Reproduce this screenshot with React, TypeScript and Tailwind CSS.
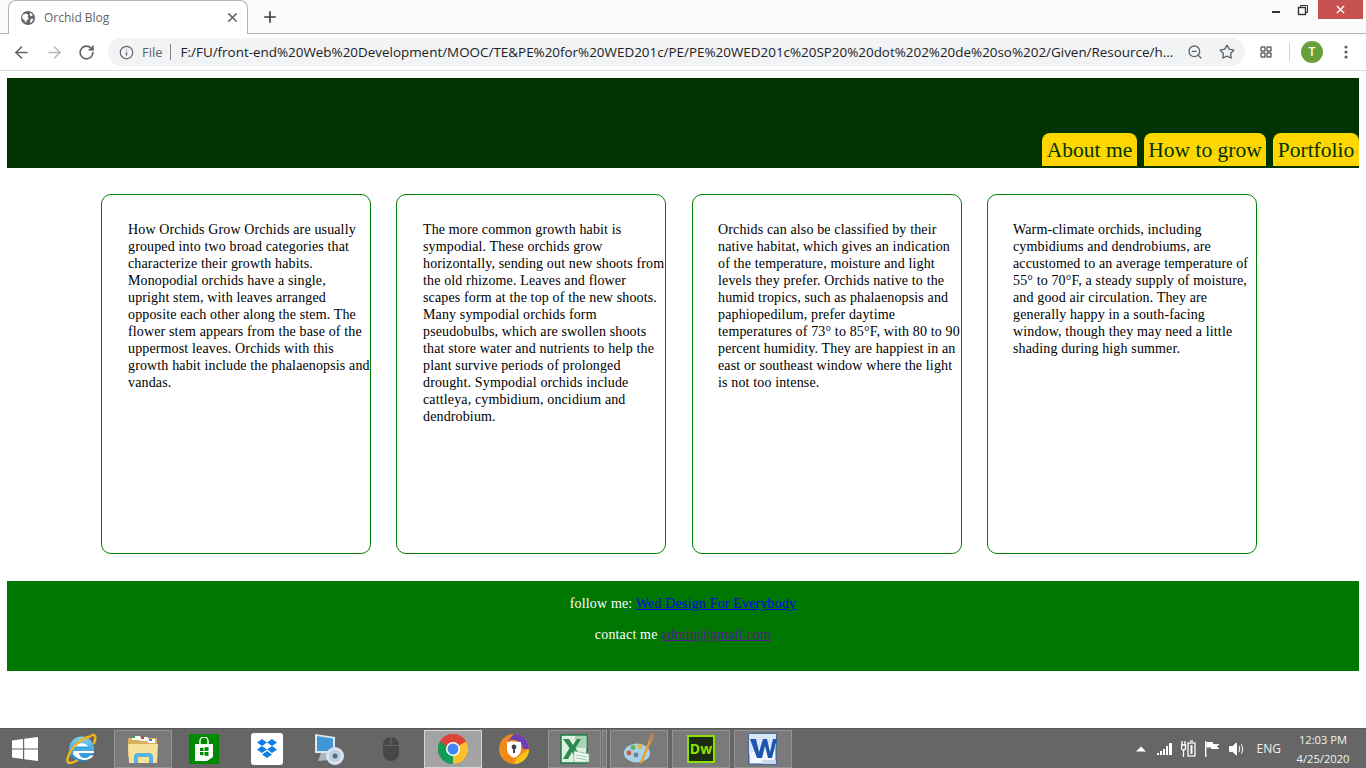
import React from "react";
import { ArrowLeft, ArrowRight, RotateCw, Info, ZoomOut, Star, X, Plus } from "lucide-react";

const cards: string[][] = [
  ["How Orchids Grow Orchids are usually","grouped into two broad categories that","characterize their growth habits.","Monopodial orchids have a single,","upright stem, with leaves arranged","opposite each other along the stem. The","flower stem appears from the base of the","uppermost leaves. Orchids with this","growth habit include the phalaenopsis and","vandas."],
  ["The more common growth habit is","sympodial. These orchids grow","horizontally, sending out new shoots from","the old rhizome. Leaves and flower","scapes form at the top of the new shoots.","Many sympodial orchids form","pseudobulbs, which are swollen shoots","that store water and nutrients to help the","plant survive periods of prolonged","drought. Sympodial orchids include","cattleya, cymbidium, oncidium and","dendrobium."],
  ["Orchids can also be classified by their","native habitat, which gives an indication","of the temperature, moisture and light","levels they prefer. Orchids native to the","humid tropics, such as phalaenopsis and","paphiopedilum, prefer daytime","temperatures of 73° to 85°F, with 80 to 90","percent humidity. They are happiest in an","east or southeast window where the light","is not too intense."],
  ["Warm-climate orchids, including","cymbidiums and dendrobiums, are","accustomed to an average temperature of","55° to 70°F, a steady supply of moisture,","and good air circulation. They are","generally happy in a south-facing","window, though they may need a little","shading during high summer."],
];

function Cell({ w, ml, boxed, active, children }: { w: string; ml: string; boxed?: boolean; active?: boolean; children: React.ReactNode }) {
  const box = active
    ? "border border-[#d5d5d5] bg-[#a3a3a3]"
    : boxed
    ? "border border-[#939393] bg-[#7a7a7a]"
    : "";
  return <div className={`h-[38px] flex items-center justify-center shrink-0 ${w} ${ml} ${box}`}>{children}</div>;
}

function Tab({ label, w, ml }: { label: string; w: string; ml: string }) {
  return (
    <a className={`block h-[33px] ${w} ${ml} shrink-0 bg-[#ffd700] rounded-t-[8px] text-[21.5px] leading-[35px] text-center text-[#003300] whitespace-nowrap`}>
      {label}
    </a>
  );
}

export default function App() {
  return (
    <div className="w-[1366px] h-[768px] overflow-hidden bg-white flex flex-col font-['Liberation_Serif',serif]">
      {/* Browser chrome */}
      <div className="h-[71px] shrink-0 flex flex-col border-b border-[#dadce0] font-['Open_Sans','Noto_Sans',sans-serif]">
        <div className="h-[34px] shrink-0 flex bg-[#fbfbfb] relative">
          <div className="absolute left-0 right-0 bottom-0 h-px bg-[#b4b4b4]" />
          <div className="relative z-10 ml-[8px] w-[240px] h-[34px] bg-white border border-b-0 border-[#b4b4b4] rounded-t-[8px] flex items-center pl-[12px] pr-[7px]">
            <svg width="14" height="14" viewBox="0 0 14 14" className="shrink-0">
              <circle cx="7" cy="7" r="7" fill="#5f6368" />
              <path d="M2 3.5 L5 2.5 L7.5 4 L6.5 6 L8 7.5 L6 9 L5 12 L3.5 9.5 L1 7 Z M9.5 1.5 L12 4 L10 5.5 L8.5 3.5 Z M9.5 8 L12.5 7.5 L11 11 L9 12 Z" fill="#fff" />
            </svg>
            <span className="ml-[9px] text-[12px] leading-[16px] text-[#5f6368]">Orchid Blog</span>
            <X size={15} strokeWidth={2.6} className="ml-auto text-[#5f6368]" />
          </div>
          <Plus size={18} strokeWidth={2.2} className="relative z-10 ml-[13px] mt-[8px] text-[#3c4043]" />
          <div className="ml-auto flex items-start">
            <div className="w-[8px] h-[2px] mt-[11px] mr-[17px] bg-[#333]" />
            <svg width="12" height="12" viewBox="0 0 12 12" className="mt-[4px] mr-[9px]" fill="none" stroke="#333" strokeWidth="1">
              <rect x="1.5" y="3.5" width="7" height="7" strokeWidth="1.4" />
              <path d="M3.5 3 V1.5 H10.5 V8.5 H9" />
            </svg>
            <div className="w-[45px] h-[19px] mr-[3px] bg-[#c75050] flex items-center justify-center">
              <X size={13} strokeWidth={2.6} className="text-white" />
            </div>
          </div>
        </div>
        <div className="flex-1 flex items-center bg-white">
          <ArrowLeft size={19} strokeWidth={2} className="ml-[12px] text-[#5f6368]" />
          <ArrowRight size={19} strokeWidth={2} className="ml-[14px] text-[#b5b7ba]" />
          <RotateCw size={17} strokeWidth={2.4} className="ml-[14px] text-[#5f6368]" />
          <div className="ml-[13px] w-[1137px] h-[28px] rounded-full bg-[#f1f3f4] flex items-center pl-[11px] text-[#5f6368]">
            <Info size={15} strokeWidth={2} />
            <span className="ml-[8px] text-[13px] leading-[18px]">File</span>
            <span className="ml-[7px] w-px h-[16px] bg-[#80868b]" />
            <span className="ml-[10px] text-[13.43px] leading-[18px] text-[#202124] whitespace-nowrap w-[1000px] overflow-hidden">
              F:/FU/front-end%20Web%20Development/MOOC/TE&amp;PE%20for%20WED201c/PE/PE%20WED201c%20SP20%20dot%202%20de%20so%202/Given/Resource/h...
            </span>
            <ZoomOut size={16} strokeWidth={2} className="ml-auto" />
            <Star size={16} strokeWidth={2} className="ml-[16px] mr-[10px]" />
          </div>
          <svg width="12" height="12" viewBox="0 0 12 12" className="ml-[15px]" fill="none" stroke="#5f6368" strokeWidth="1.4">
            <rect x="1" y="1" width="4" height="4" rx="0.6" /><rect x="7" y="1" width="4" height="4" rx="0.6" />
            <rect x="1" y="7" width="4" height="4" rx="0.6" /><rect x="7" y="7" width="4" height="4" rx="0.6" />
          </svg>
          <span className="ml-[17px] w-px h-[18px] bg-[#d0d2d5]" />
          <div className="ml-[11px] w-[22px] h-[22px] rounded-full bg-[#689f38] text-white text-[12px] font-semibold flex items-center justify-center">T</div>
          <svg width="4" height="14" viewBox="0 0 4 14" className="ml-[21px]" fill="#5f6368">
            <circle cx="2" cy="2" r="1.6" /><circle cx="2" cy="7" r="1.6" /><circle cx="2" cy="12" r="1.6" />
          </svg>
        </div>
      </div>

      {/* Page */}
      <div className="flex-1 px-[7px] pt-[7px] text-[14px] text-black">
        <header className="h-[90px] bg-[#003300] flex items-start justify-end pt-[55px]">
          <Tab label="About me" w="w-[95px]" ml="ml-0" />
          <Tab label="How to grow" w="w-[122px]" ml="ml-[7px]" />
          <Tab label="Portfolio" w="w-[86px]" ml="ml-[7px]" />
        </header>
        <main className="mt-[26px] ml-[94px] flex">
          {cards.map((lines, i) => (
            <div key={i} className={`w-[270px] h-[360px] shrink-0 border border-[#008000] rounded-[10px] pt-[26px] leading-[17px] tracking-[0.14px] ${i === 0 ? "pl-[26px]" : i === 1 ? "ml-[25px] pl-[26px]" : i === 2 ? "ml-[26px] pl-[25px]" : "ml-[25px] pl-[25px]"}`}>
              {lines.map((l) => (
                <span key={l} className="block whitespace-nowrap">{l}</span>
              ))}
            </div>
          ))}
        </main>
        <footer className="mt-[27px] h-[90px] bg-[#007700] text-white text-center pt-[14px] leading-[17px] tracking-[0.17px]">
          <p>follow me: <a className="text-[#0000ee] underline">Wed Design For Everybody</a></p>
          <p className="mt-[14px]">contact me <a className="text-[#551a8b] underline">admin@gmail.com</a></p>
        </footer>
      </div>

      {/* Taskbar */}
      <div className="h-[40px] shrink-0 bg-[#666666] border-t border-[#5a5a5a] flex items-center text-white font-['Open_Sans','Noto_Sans',sans-serif]">
        <Cell w="w-[50px]" ml="ml-0">
          <svg width="26" height="26" viewBox="0 0 26 26" fill="#fff">
            <path d="M0 4.5 L11 3 V12.4 H0 Z M12.2 2.8 L26 1 V12.4 H12.2 Z M0 13.6 H11 V23 L0 21.5 Z M12.2 13.6 H26 V25 L12.2 23.2 Z" />
          </svg>
        </Cell>
        <Cell w="w-[58px]" ml="ml-[2px]">
          <svg width="32" height="32" viewBox="0 0 32 32">
            <defs>
              <linearGradient id="ieb" x1="0" y1="0" x2="0" y2="1"><stop offset="0" stopColor="#7fd4f5" /><stop offset="1" stopColor="#1787cf" /></linearGradient>
            </defs>
            <circle cx="16.5" cy="16" r="12.5" fill="url(#ieb)" />
            <path d="M9.5 15 H23.8 A7.6 7 0 0 0 9.5 15 Z" fill="#fff" />
            <path d="M8.5 18 H29 L29 20 H14 A6 5.5 0 0 0 25 22.5 H29 A13 12.5 0 0 1 8 21 Z" fill="#fff" />
            <path d="M8.5 13.5 H24 V15.5 H8.5 Z" fill="#2fa0de" />
            <path d="M27 2.2 C31 1 31 6 29 10 M25 3.5 C13 6 4 18 2.5 26 C1.5 31 6 31 12 27.5" fill="none" stroke="#f2b61a" strokeWidth="2.4" strokeLinecap="round" />
          </svg>
        </Cell>
        <Cell w="w-[58px]" ml="ml-[4px]" boxed>
          <svg width="32" height="32" viewBox="0 0 32 32">
            <path d="M1 5 H30 V24 H1 Z" fill="#d9b35a" />
            <rect x="5" y="3" width="8" height="4" fill="#fff" /><rect x="13" y="4" width="8" height="4" fill="#f4f4f4" /><rect x="21" y="6" width="7" height="4" fill="#fff" />
            <rect x="5" y="3" width="3" height="2" fill="#3ca14a" /><rect x="14" y="4" width="3" height="2" fill="#c8402f" /><rect x="22" y="6" width="3" height="2" fill="#3b86d1" />
            <path d="M1 11 H31 L30 30 H2 Z" fill="#f7e29c" />
            <path d="M7 30 V24 Q7 20 11 20 H22 Q26 20 26 24 V30 H22 V24 H11 V30 Z" fill="#57b3e0" />
          </svg>
        </Cell>
        <Cell w="w-[58px]" ml="ml-[3px]">
          <div className="w-[30px] h-[30px] bg-[#008a00] flex items-center justify-center">
            <svg width="20" height="24" viewBox="0 0 20 24">
              <path d="M6 7 V4 A4 4 0 0 1 14 4 V7" fill="none" stroke="#fff" strokeWidth="1.4" />
              <path d="M1 7 H19 V20 L13 24 H1 Z" fill="#fff" />
              <path d="M6 11 L9.5 10.5 V14 H6 Z M10.5 10.4 L14.5 10 V14 H10.5 Z M6 15 H9.5 V18.5 L6 18 Z M10.5 15 H14.5 V19 L10.5 18.6 Z" fill="#008a00" />
            </svg>
          </div>
        </Cell>
        <Cell w="w-[58px]" ml="ml-[5px]">
          <div className="w-[32px] h-[32px] bg-white rounded-[3px] flex items-center justify-center">
            <svg width="22" height="22" viewBox="0 0 22 22" fill="#0b7fe6">
              <path d="M6 1 L11 4.5 L6 8 L1 4.5 Z M16 1 L21 4.5 L16 8 L11 4.5 Z M6 8 L11 11.5 L6 15 L1 11.5 Z M16 8 L21 11.5 L16 15 L11 11.5 Z M6 16.5 L11 13 L16 16.5 L11 20 Z" />
            </svg>
          </div>
        </Cell>
        <Cell w="w-[58px]" ml="ml-[4px]">
          <svg width="32" height="34" viewBox="0 0 32 34">
            <path d="M2 2 L22 5 V21 L2 21 Z" fill="#dfe7ee" />
            <path d="M4 4 L20 6.5 V19 L4 19 Z" fill="#3f97d8" />
            <path d="M8 21 H15 L16 28 L5 29 Z" fill="#aeb6bd" />
            <circle cx="22" cy="24" r="9" fill="#dce3ea" />
            <circle cx="22" cy="24" r="6" fill="#b9d2e6" />
            <circle cx="22" cy="24" r="2.5" fill="#5a6a78" />
          </svg>
        </Cell>
        <Cell w="w-[58px]" ml="ml-[4px]">
          <svg width="18" height="26" viewBox="0 0 18 26">
            <path d="M1 9 A8 8 0 0 1 8.4 1 V9 Z M9.6 1 A8 8 0 0 1 17 9 V9 H9.6 Z M1 10 H17 V17 A8 8 0 0 1 1 17 Z" fill="#474747" />
          </svg>
        </Cell>
        <Cell w="w-[58px]" ml="ml-[4px]" active>
          <svg width="30" height="30" viewBox="0 0 30 30">
            <circle cx="15" cy="15" r="15" fill="#db4437" />
            <path d="M15 15 L28 7.5 A15 15 0 0 1 15 30 Z" fill="#fbc02d" />
            <path d="M15 15 L15 30 A15 15 0 0 1 2 7.5 Z" fill="#0f9d58" />
            <path d="M2 7.5 A15 15 0 0 1 15 0 A15 15 0 0 1 28 7.5 H15 L9 12 Z" fill="#db4437" />
            <circle cx="15" cy="15" r="7" fill="#fff" />
            <circle cx="15" cy="15" r="5.5" fill="#4285f4" />
          </svg>
        </Cell>
        <Cell w="w-[58px]" ml="ml-[3px]">
          <svg width="30" height="30" viewBox="0 0 30 30">
            <circle cx="15" cy="15" r="15" fill="#f08a1d" />
            <path d="M15 0 A15 15 0 0 1 30 15 L24 15 A10 10 0 0 0 8 8 Z" fill="#6a3fb5" />
            <path d="M30 15 A15 15 0 0 1 15 30 L18 24 Z" fill="#f5c518" />
            <path d="M8 8 Q15 7 22 8 V15 Q22 21 15 24 Q8 21 8 15 Z" fill="#fff" />
            <circle cx="15" cy="13" r="2.4" fill="#444" />
            <rect x="14" y="14" width="2" height="5" fill="#444" />
          </svg>
        </Cell>
        <Cell w="w-[53px]" ml="ml-[5px]" boxed>
          <svg width="30" height="30" viewBox="0 0 30 30">
            <rect x="1" y="1" width="26" height="28" fill="#dff0e2" stroke="#1f7a43" strokeWidth="1.5" />
            <path d="M15 2 H26.5 V14 H15 Z" fill="#a9d5b5" />
            <path d="M3 5 H9 L13 11 L17 5 H21 L15.5 14 L22 25 H16 L12 18 L8 25 H3 L9.5 14 Z" fill="#2a8a4e" />
            <path d="M14 17 L29 20 V28 H14 Z" fill="#f4f8f4" stroke="#7cb58f" strokeWidth="0.7" />
            <path d="M16 21 L27 23 M16 24 L27 26" stroke="#8cc09c" strokeWidth="0.8" />
          </svg>
        </Cell>
        <div className="w-[5px] h-[38px] ml-px shrink-0 border border-[#939393] bg-[#7a7a7a]" />
        <Cell w="w-[58px]" ml="ml-[3px]" boxed>
          <svg width="32" height="34" viewBox="0 0 32 34">
            <ellipse cx="14" cy="21" rx="13" ry="9.5" fill="#a6d2ea" />
            <circle cx="6" cy="21" r="2.4" fill="#d94f3d" />
            <circle cx="10" cy="15.5" r="2.4" fill="#67b04a" />
            <circle cx="17" cy="14.5" r="2.4" fill="#eab838" />
            <circle cx="13" cy="23" r="2.4" fill="#6d8291" />
            <path d="M18 31 L27 9" stroke="#e9a02b" strokeWidth="2.4" />
            <path d="M25 9 L28 1 L31 3 L29 10 Z" fill="#b58a5a" />
          </svg>
        </Cell>
        <Cell w="w-[58px]" ml="ml-[4px]" boxed>
          <div className="w-[28px] h-[28px] bg-[#1d2a12] border-[2px] border-[#8ee000] text-[#8ee000] text-[14px] font-bold leading-none flex items-center justify-center">Dw</div>
        </Cell>
        <Cell w="w-[58px]" ml="ml-[4px]" boxed>
          <svg width="30" height="32" viewBox="0 0 30 32">
            <rect x="1" y="1" width="27" height="30" fill="#f4f7fb" stroke="#1f5bb0" />
            <path d="M1 1 H28 V14 Q14 10 1 22 Z" fill="#d8e6f6" />
            <path d="M2 6 H8 L11 19 L15 6 H19 L22 19 L25 6 H29 L24 25 H20 L17 13 L14 25 H9 Z" fill="#1c55ae" />
            <path d="M14 27 H28 V31 H14 Z" fill="#c9d8ec" />
          </svg>
        </Cell>
        <div className="ml-auto flex items-center h-full">
          <svg width="10" height="6" viewBox="0 0 10 6" fill="#fff" className="mr-[11px]"><path d="M0 5.5 L5 0.5 L10 5.5 Z" /></svg>
          <svg width="16" height="12" viewBox="0 0 16 12" fill="#fff" className="mr-[8px]">
            <rect x="0" y="10" width="2" height="2" /><rect x="3" y="8" width="2" height="4" /><rect x="6" y="6" width="2" height="6" /><rect x="9" y="3" width="2" height="9" /><rect x="12" y="0" width="3" height="12" />
          </svg>
          <svg width="15" height="18" viewBox="0 0 15 18" fill="none" stroke="#fff" strokeWidth="1.3" className="mr-[9px]">
            <rect x="7" y="3" width="7" height="13" /><rect x="9.5" y="5" width="2" height="9" fill="#fff" stroke="none" /><path d="M9 1 H12" />
            <path d="M1 1 V5 M4 1 V5 M0.5 5 H4.5 V8 Q4.5 10 2.5 10 Q0.5 10 0.5 8 Z M2.5 10 V17" />
          </svg>
          <svg width="15" height="16" viewBox="0 0 15 16" fill="#fff" className="mr-[9px]">
            <rect x="0" y="0" width="1.4" height="16" /><path d="M1.4 1 H8 V3 H14.5 L12 5.5 L14.5 8 H6 V6.5 H1.4 Z" />
          </svg>
          <svg width="15" height="14" viewBox="0 0 15 14" fill="none" stroke="#fff" strokeWidth="1" className="mr-[13px]">
            <path d="M0.5 4.5 H3.5 L7.5 1 V13 L3.5 9.5 H0.5 Z" fill="#fff" /><path d="M10 4 Q11.5 7 10 10 M12.5 2.5 Q15 7 12.5 11.5" />
          </svg>
          <span className="text-[12px] leading-[16px] text-[#f2f2f2] mr-[4px]">ENG</span>
          <div className="w-[76px] mr-[5px] text-center text-[11.2px] leading-[19px] text-[#f2f2f2]">
            <div>12:03 PM</div>
            <div>4/25/2020</div>
          </div>
        </div>
      </div>
    </div>
  );
}
